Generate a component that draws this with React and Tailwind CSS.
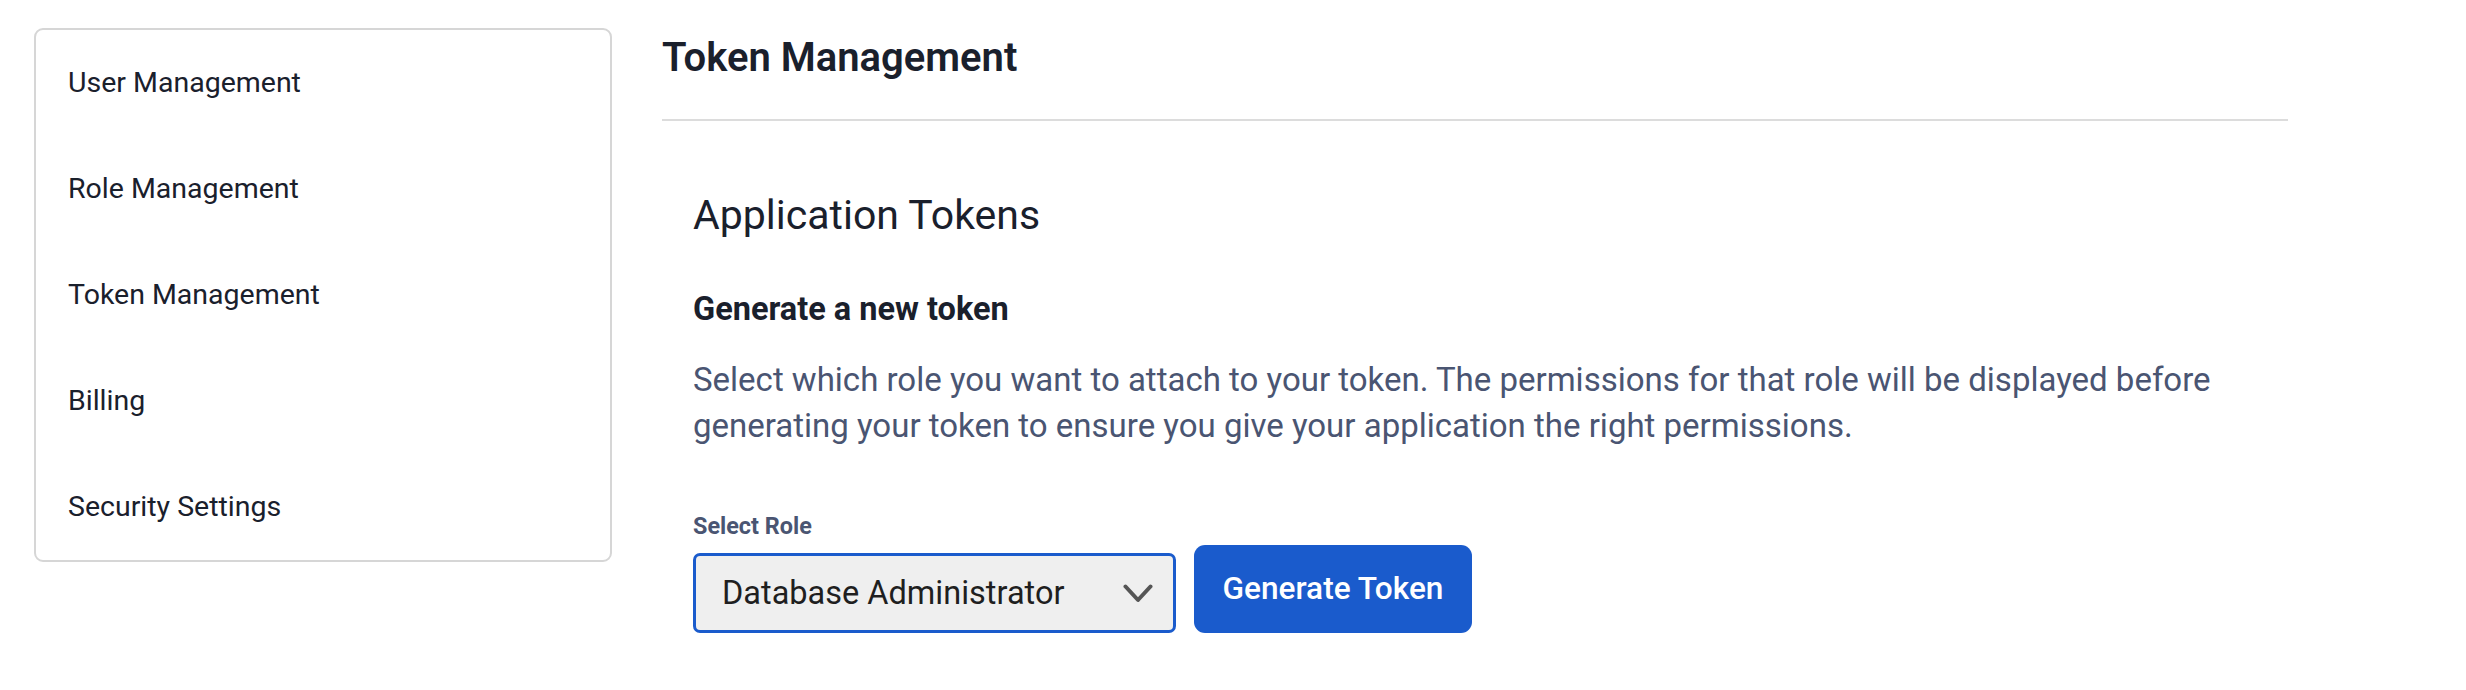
import React from "react";

const items = ["User Management", "Role Management", "Token Management", "Billing", "Security Settings"];

export default function App() {
  return (
    <div className="min-h-[690px] w-full bg-white font-['Roboto',sans-serif] text-[#1a202c]">
      <div className="flex items-start pl-[34px] pt-[28px]">
        <aside className="w-[578px] shrink-0 rounded-[9px] border-2 border-[#d6d6d6]">
          <ul className="flex flex-col">
            {items.map((it) => (
              <li key={it} className="flex h-[106px] items-center px-[32px] text-[28.5px] leading-none">
                {it}
              </li>
            ))}
          </ul>
        </aside>
        <main className="ml-[50px] w-[1626px]">
          <div className="border-b-2 border-[#dcdcdc] pb-[37px] pt-[6px]">
            <h1 className="text-[40px] font-semibold leading-[48px]">Token Management</h1>
          </div>
          <section className="pl-[31px] pt-[70px]">
            <h2 className="text-[41px] leading-[48px]">Application Tokens</h2>
            <h3 className="mt-[50px] text-[32.5px] font-bold leading-[40px]">Generate a new token</h3>
            <p className="mt-[28px] max-w-[1520px] text-[33px] leading-[45.6px] text-[#4a5572]">
              Select which role you want to attach to your token. The permissions for that role will be displayed before generating your token to ensure you give your application the right permissions.
            </p>
            <div className="mt-[64px] flex items-end gap-[18px]">
              <div className="flex flex-col">
                <label className="mb-[13px] text-[23.4px] font-bold leading-[28px] text-[#4a5572]">Select Role</label>
                <div className="flex h-[80px] w-[483px] items-center justify-between rounded-[7px] border-[3px] border-[#1a5bcc] bg-[#efefef] pl-[26px] pr-[20px]">
                  <span className="text-[32.5px] text-[#1f1f1f]">Database Administrator</span>
                  <svg width="30" height="19" viewBox="0 0 30 19" fill="none">
                    <path d="M2.5 2.5 L15 16 L27.5 2.5" stroke="#555555" strokeWidth="4" strokeLinecap="round" strokeLinejoin="round" />
                  </svg>
                </div>
              </div>
              <button className="flex h-[88px] w-[278px] items-center justify-center rounded-[11px] bg-[#1a5bcc] text-[31.6px] font-medium text-white">
                Generate Token
              </button>
            </div>
          </section>
        </main>
      </div>
    </div>
  );
}
